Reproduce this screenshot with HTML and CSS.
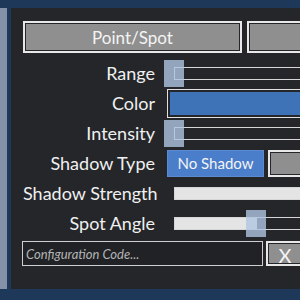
FILE: index.html
```html
<!DOCTYPE html>
<html lang="en">
<head>
    <meta charset="UTF-8">
    <title>Light Settings</title>
    <link rel="stylesheet" href="styles.css">
</head>
<body>
    <div class="app">
        <div class="sidebar"></div>
        <div class="panel">
            <div class="tabs">
                <button class="btn tab">Point/Spot</button>
                <button class="btn tab"></button>
            </div>

            <div class="form">
                <label>Range</label>
                <div class="slider">
                    <div class="track"></div>
                    <div class="thumb" style="left: 0%"></div>
                </div>

                <label>Color</label>
                <div class="color-box"><div class="swatch"></div></div>

                <label>Intensity</label>
                <div class="slider">
                    <div class="track"></div>
                    <div class="thumb" style="left: 0%"></div>
                </div>

                <label>Shadow Type</label>
                <div class="choices">
                    <button class="choice active">No Shadow</button>
                    <button class="btn choice"></button>
                </div>

                <label>Shadow Strength</label>
                <div class="slider">
                    <div class="track"><div class="fill" style="width: 100%"></div></div>
                </div>

                <label>Spot Angle</label>
                <div class="slider">
                    <div class="track"><div class="fill" style="width: 82px"></div></div>
                    <div class="thumb" style="left: 82px"></div>
                </div>
            </div>

            <div class="config">
                <input type="text" placeholder="Configuration Code...">
                <button class="btn close">X</button>
            </div>
        </div>
    </div>
</body>
</html>
```

FILE: styles.css
```css
html, body {
    margin: 0;
    height: 100%;
    overflow: hidden;
}

body {
    background-color: #1d3859;
    font-family: 'Lato', sans-serif;
    color: #f0f0f0;
}

.app {
    display: flex;
    gap: 4px;
    padding-top: 8px;
}

.sidebar {
    width: 7px;
    height: 281px;
    background-color: #8492a8;
    flex-shrink: 0;
}

.panel {
    width: 480px;
    height: 281px;
    flex-shrink: 0;
    background-color: #24262a;
    padding: 13px 0 0 12px;
    box-sizing: border-box;
}

.btn {
    background-color: #8f8f8f;
    border: 2px solid #e8e8e8;
    box-shadow: inset 0 0 0 1px #24262a;
    color: #f4f4f4;
    font-family: inherit;
    padding: 0;
}

.tabs {
    display: flex;
    gap: 5px;
}

.tab {
    width: 219px;
    height: 32px;
    font-size: 17px;
}

.form {
    display: grid;
    grid-template-columns: 132px 1fr;
    column-gap: 12px;
    grid-auto-rows: 30px;
    align-items: center;
    margin-top: 5px;
}

.form label {
    text-align: right;
    font-size: 18px;
    white-space: nowrap;
}

.slider {
    position: relative;
    height: 27px;
    display: flex;
    align-items: center;
    padding-left: 7px;
}

.track {
    flex: 1;
    height: 13px;
    border: 1px solid #d6d6d6;
    box-sizing: border-box;
    background-color: #24262a;
}

.fill {
    height: 100%;
    background-color: #e4e4e4;
}

.thumb {
    position: absolute;
    top: 0;
    width: 20px;
    height: 27px;
    margin-left: -3px;
    background-color: rgba(175, 198, 225, 0.8);
}

.color-box {
    height: 29px;
    border: 1px solid #e0e0e0;
    padding: 2px;
    box-sizing: border-box;
}

.swatch {
    height: 100%;
    background-color: #3f73b8;
}

.choices {
    display: flex;
    gap: 4px;
    height: 27px;
}

.choice {
    width: 97px;
    height: 27px;
    font-size: 15px;
}

.choice.active {
    background-color: #4a7ecb;
    border: 1px solid #5b8ad0;
    color: #f4f4f4;
    font-family: inherit;
    padding: 0;
}

.config {
    display: flex;
    gap: 3px;
    margin-top: 3px;
    margin-left: -1px;
}

.config input {
    width: 241px;
    height: 25px;
    box-sizing: border-box;
    background-color: #202226;
    border: 1px solid #cfcfcf;
    padding: 0 3px;
    font-family: inherit;
    font-size: 13px;
    font-style: italic;
    color: #bbb;
}

.config input::placeholder {
    color: #b4b4b4;
}

.close {
    width: 38px;
    height: 25px;
    font-size: 20px;
}
```
